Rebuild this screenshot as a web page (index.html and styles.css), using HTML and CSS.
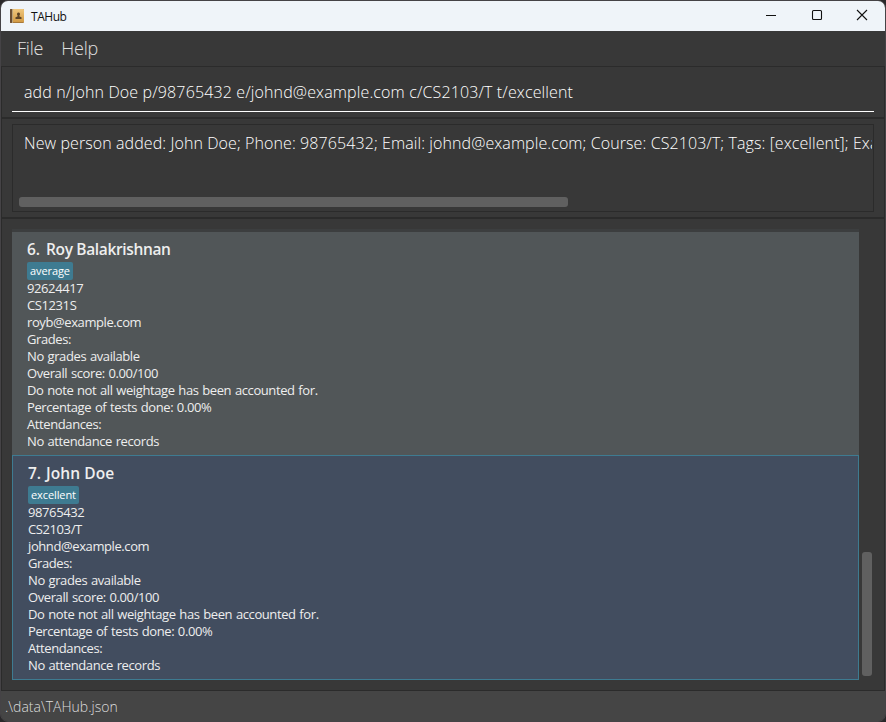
FILE: index.html
```html
<!DOCTYPE html>
<html lang="en">
<head>
<meta charset="utf-8">
<title>TAHub</title>
<link rel="stylesheet" href="styles.css">
</head>
<body>
<div class="window">
  <header class="titlebar">
    <svg class="app-icon" width="14" height="14" viewBox="0 0 14 14">
      <defs><linearGradient id="cover" x1="0" y1="0" x2="0" y2="1"><stop offset="0" stop-color="#efc77d"/><stop offset="1" stop-color="#d29a45"/></linearGradient></defs>
      <rect width="14" height="14" rx="1" fill="#a87939"/>
      <rect x="3" width="11" height="13" rx=".6" fill="url(#cover)"/>
      <rect width="2" height="14" rx=".8" fill="#6b4e32"/>
      <rect x="2" width="1" height="14" fill="#b9a27a"/>
      <path d="M8.500 3.500a1.500 1.600 0 0 1 1 2.800v1.200l2 .8v1.700h-6V8.300l2-.8V6.300a1.500 1.600 0 0 1 1-2.800z" fill="#5c4326"/>
    </svg>
    <span class="title">TAHub</span>
    <div class="controls">
      <svg width="12" height="12" viewBox="0 0 12 12"><path d="M1 6.500h10" /></svg>
      <svg width="12" height="12" viewBox="0 0 12 12"><rect x="1.500" y="1.500" width="9" height="9" rx="1"/></svg>
      <svg width="12" height="12" viewBox="0 0 12 12"><path d="M1 1l10 10M11 1L1 11"/></svg>
    </div>
  </header>
  <nav class="menubar"><span class="file">File</span><span class="help">Help</span></nav>
  <main class="content">
    <section class="command"><div class="field"><span class="command-text">add n/John Doe p/98765432 e/johnd@example.com c/CS2103/T t/excellent</span></div></section>
    <section class="result"><div class="result-box">
      <div class="result-text">New person added: John Doe; Phone: 98765432; Email: johnd@example.com; Course: CS2103/T; Tags: [excellent]; Exa</div>
      <div class="hbar"></div>
    </div></section>
    <section class="list">
      <div class="cards">
        <article class="card">
          <h2><span class="index">6.</span><span class="name long">Roy Balakrishnan</span></h2>
          <div class="tags"><span class="tag">average</span></div>
          <p>92624417</p><p>CS1231S</p><p>royb@example.com</p><p>Grades:</p><p>No grades available</p><p>Overall score: 0.00/100</p><p>Do note not all weightage has been accounted for.</p><p>Percentage of tests done: 0.00%</p><p>Attendances:</p><p>No attendance records</p>
        </article>
        <article class="card selected">
          <h2><span class="index">7.</span><span class="name">John Doe</span></h2>
          <div class="tags"><span class="tag">excellent</span></div>
          <p>98765432</p><p>CS2103/T</p><p>johnd@example.com</p><p>Grades:</p><p>No grades available</p><p>Overall score: 0.00/100</p><p>Do note not all weightage has been accounted for.</p><p>Percentage of tests done: 0.00%</p><p>Attendances:</p><p>No attendance records</p>
        </article>
      </div>
      <div class="vbar"></div>
    </section>
  </main>
  <footer class="status"><span>.\data\TAHub.json</span></footer>
</div>
</body>
</html>
```
FILE: styles.css
```css
* { box-sizing: border-box; }
body { margin: 0; background: #29282a; font-family: "Open Sans", "Noto Sans", sans-serif; }
.window { width: 886px; height: 722px; border: 1px solid #454346; border-radius: 8px; overflow: hidden; display: flex; flex-direction: column; background: #383838; }
.titlebar { height: 30px; flex: none; background: #eff4f9; display: flex; align-items: center; padding: 0 17px 0 9px; color: #111; }
.title { font-size: 12px; margin-left: 7px; letter-spacing: -.45px; }
.controls { margin-left: auto; margin-top: -2px; display: flex; gap: 33.500px; }
.controls svg { fill: none; stroke: #111; stroke-width: 1.100; }
.menubar { height: 35px; flex: none; display: flex; gap: 18px; padding-left: 16px; line-height: 35px; font-size: 18px; font-weight: 300; color: #e0e0e0; letter-spacing: -.2px; }
.content { flex: 1; border: 1px solid #2b2b2b; display: flex; flex-direction: column; }
.command { height: 52px; flex: none; padding: 5px 10px 0; border-bottom: 2px solid #2b2b2b; }
.field { height: 40px; border-bottom: 1px solid #fff; padding-left: 12px; line-height: 40px; font-size: 16px; font-weight: 300; letter-spacing: .134px; color: #fff; white-space: nowrap; }
.result { height: 100px; flex: none; padding: 5px 10px 0; border-bottom: 2px solid #2b2b2b; }
.result-box { height: 88px; border: 1px solid #2b2b2b; padding: 4px 1px 4px 6px; display: flex; flex-direction: column; overflow: hidden; }
.result-text { padding-left: 5px; line-height: 28px; font-size: 16px; font-weight: 300; letter-spacing: .088px; color: #fff; white-space: nowrap; overflow: hidden; }
.hbar { margin-top: auto; width: 549px; height: 10px; border-radius: 3px; background: #606060; }
.list { flex: 1; display: flex; padding: 10px 12px 10px 10px; gap: 3px; }
.cards { width: 847px; border-top: 3px solid #3c3e3f; }
.card { height: 223px; padding: 5px 15px; background: #515658; color: #eee; }
.card.selected { height: 225px; background: #424d5f; border: 1px solid #3e7b91; }
h2 { margin: 0; display: flex; font-size: 15.500px; font-weight: 600; line-height: 24px; white-space: nowrap; }
.index { width: 19px; }
.selected .index { width: 18px; }
.name { letter-spacing: .1px; }
.name.long { letter-spacing: -.35px; }
.tags { height: 19px; display: flex; padding-top: 1px; }
.tag { height: 18px; padding: 0 3px; border-radius: 2px; background: #3e7b91; color: #fff; font-size: 11px; line-height: 18px; letter-spacing: -.1px; }
p { margin: 0; font-size: 13px; line-height: 17px; letter-spacing: -.4px; word-spacing: .75px; white-space: nowrap; }
.vbar { width: 10px; height: 124px; margin-top: 323px; border-radius: 3px; background: #606060; }
.status { height: 30px; flex: none; background: #454545; color: #ddd; padding-left: 4px; font-size: 14px; font-weight: 300; line-height: 31px; }
```
